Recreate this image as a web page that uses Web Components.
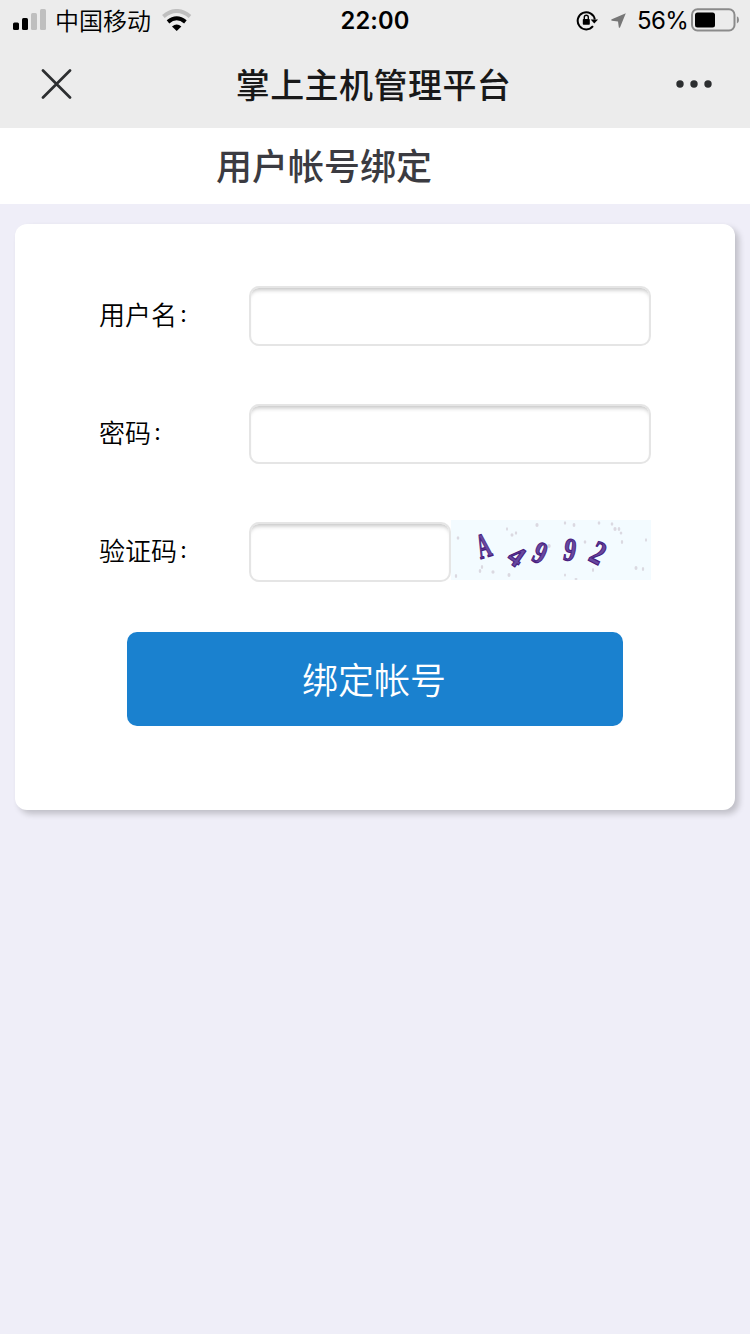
<!DOCTYPE html>
<html lang="zh-CN">
<head>
<meta charset="utf-8">
<title>掌上主机管理平台</title>
<style>
html,body{margin:0;height:100%}
body{background:#efeef8;font-family:Inter,"Noto Sans CJK SC",sans-serif;color:#000;overflow:hidden}
</style>
</head>
<body>
<bind-page></bind-page>
<script>
function define(name, html){
  const t=document.createElement('template');
  t.innerHTML=html;
  customElements.define(name,class extends HTMLElement{
    constructor(){
      super();
      this.attachShadow({mode:'open'}).appendChild(t.content.cloneNode(true));
    }
  });
}

define('status-bar',`
<style>
:host{display:grid;grid-template-columns:1fr auto 1fr;height:40px;align-items:center;background:#ececec;font-size:24px;line-height:38px}
.side{display:flex;align-items:center;height:40px}
.left{padding-left:13px}
.right{justify-content:flex-end;padding-right:11px}
svg{display:block;flex:none}
.carrier{margin:0 10px 0 9px;width:97px;white-space:nowrap;line-height:36px;padding-top:4px;font-weight:350}
.time{font-weight:600;font-size:23.7px;letter-spacing:.1px;width:70px;text-align:center;white-space:nowrap;padding-top:2px}
.pct{margin:0 5px 0 11px;letter-spacing:-.6px;width:50px;white-space:nowrap;padding-top:2px}
</style>
<div class="side left">
<svg width="33" height="22" viewBox="0 0 33 22"><rect y="13.5" width="6" height="7.5" rx="1.5"/><rect x="9" y="9" width="6" height="12" rx="1.5"/><g fill="#bfbfbf"><rect x="18" y="4" width="6" height="17" rx="1.5"/><rect x="27" y="0" width="6" height="21" rx="1.5"/></g></svg>
<span class="carrier">中国移动</span>
<svg width="30" height="22" viewBox="0 0 30 22"><g fill="none" stroke-width="4"><path stroke="#bfbfbf" d="M1.4 7.5Q14.7-3.5 28 7.5"/><path stroke="#000" d="M6 12.9Q14.7 5.7 23.4 12.9"/></g><path d="M10 17.4Q14.7 13.5 19.4 17.4L14.7 21.9Z"/></svg>
</div>
<span class="time">22:00</span>
<div class="side right">
<svg width="22" height="22" viewBox="0 0 22 22"><path fill="none" stroke="#000" stroke-width="2" d="M17 17.2A8.6 8.6 0 1 1 18.8 10.5"/><path d="M14.6 10.4H22L18.3 14.6Z"/><rect x="6.8" y="10" width="7" height="5.8" rx=".8"/><path fill="none" stroke="#000" stroke-width="1.4" d="M8.3 10.4V8.2a2 2 0 0 1 4 0v2.2"/></svg>
<svg width="15" height="15" viewBox="0 0 15 15" style="margin-left:13px"><path fill="#777" d="M14.8.2 9 14.4Q8.2 15.4 7.8 14.2L7 8.6 1 7.7Q-.4 7 .8 6.2Z"/></svg>
<span class="pct">56%</span>
<svg width="48" height="24" viewBox="0 0 48 24" style="margin-left:-1px"><rect x="1" y="1.3" width="42.5" height="21.2" rx="5.5" fill="none" stroke="#8b8b8b" stroke-width="2"/><rect x="4" y="4.5" width="20" height="15" rx="2.5"/><path fill="#8b8b8b" d="M45.9 8.3Q48 9 48 11.9T45.9 15.5Z"/></svg>
</div>`);

define('nav-bar',`
<style>
:host{display:grid;grid-template-columns:1fr auto 1fr;align-items:center;height:88px;background:#ececec;box-sizing:border-box;padding:0 38px 0 41px}
.title{font-size:34px;font-weight:500;letter-spacing:.45px;color:#191919;line-height:85px;padding-top:3px;margin-right:6px}
svg{display:block}
.more{justify-self:end}
</style>
<svg width="31" height="31" viewBox="0 0 31 31"><path d="M2 1.5 29 28.5M29 1.5 2 28.5" fill="none" stroke="#2c2e30" stroke-width="2.7" stroke-linecap="round"/></svg>
<span class="title"><slot></slot></span>
<svg class="more" width="36" height="8" viewBox="0 0 36 8" fill="#2c2e30"><circle cx="4" cy="4" r="3.7"/><circle cx="18" cy="4" r="3.7"/><circle cx="32" cy="4" r="3.7"/></svg>`);

define('page-title',`
<style>
:host{display:block;box-sizing:border-box;height:76px;line-height:74px;padding-top:2px;background:#fff;color:#3b3b41;font-size:36px;font-weight:500;padding-left:216px}
</style><slot></slot>`);

define('form-card',`
<style>
:host{display:flex;flex-direction:column;box-sizing:border-box;margin:20px 15px 0;height:586px;padding:62px 84px 0;background:#fff;border-radius:12px;box-shadow:4px 4px 6px rgba(0,0,0,.2)}
</style><slot></slot>`);

define('form-row',`
<style>
:host{display:flex;align-items:center;height:60px;margin-bottom:58px}
.label{width:150px;flex:none;font-size:26px;font-weight:350;line-height:60px}
.colon{position:relative;top:-3px;margin-left:2px;font-size:18px;line-height:1;font-weight:500}
.field{display:flex;width:402px}
</style>
<span class="label"><slot name="label"></slot><span class="colon">：</span></span><div class="field"><slot></slot></div>`);

define('text-field',`
<style>
:host{display:block;flex:1;min-width:0;height:60px}
input{display:block;box-sizing:border-box;width:100%;height:60px;border:2px solid #e5e5e5;border-radius:10px;background:#fff;box-shadow:inset 0 5px 4px -3px rgba(0,0,0,.24);outline:0;padding:0 10px;font:26px Inter,"Noto Sans CJK SC",sans-serif}
</style><input type="text">`);

define('captcha-code',`
<style>
:host{display:block;width:200px;height:60px;flex:none;position:relative;top:-2px}
svg{display:block}
text{font:700 32px "Liberation Serif",serif;text-anchor:middle;fill:#68489f;stroke:#48207f;stroke-width:1.2}
</style>
<svg width="200" height="60" viewBox="0 0 200 60"><rect width="200" height="60" fill="#f3fbff"/>
<g fill="#dbd9e1"><ellipse cx="7" cy="18" rx="1.3" ry="1.8"/><ellipse cx="5" cy="56" rx="1.2" ry="2"/><ellipse cx="56" cy="9" rx="1" ry="1.7"/><ellipse cx="61" cy="15" rx="1.5" ry="1.8"/><ellipse cx="65" cy="13" rx="1.2" ry="1.7"/><ellipse cx="86" cy="5" rx="1.6" ry="2"/><ellipse cx="114" cy="3" rx="1.2" ry="1.7"/><ellipse cx="123" cy="5" rx="1.4" ry="2"/><ellipse cx="148" cy="3" rx="1.3" ry="1.8"/><ellipse cx="161" cy="4" rx="1.3" ry="1.8"/><ellipse cx="164" cy="9" rx="1.6" ry="2"/><ellipse cx="168" cy="9" rx="1.3" ry="2"/><ellipse cx="170" cy="13" rx="1.3" ry="1.6"/><ellipse cx="171" cy="22" rx="1.2" ry="2"/><ellipse cx="195" cy="20" rx="1" ry="1.8"/><ellipse cx="31" cy="47" rx="1.2" ry="2"/><ellipse cx="29" cy="51" rx="1.3" ry="2"/><ellipse cx="42" cy="52" rx="1.6" ry="1.8"/><ellipse cx="58" cy="55" rx="1.5" ry="1.9"/><ellipse cx="98" cy="26" rx="1.7" ry="2"/><ellipse cx="134" cy="22" rx="1.3" ry="1.8"/><ellipse cx="142" cy="50" rx="1.1" ry="2"/><ellipse cx="125" cy="59" rx="1.5" ry="1"/><ellipse cx="185" cy="48" rx="1.5" ry="2"/><ellipse cx="192" cy="49" rx="1.2" ry="1.9"/><ellipse cx="114" cy="55" rx="1" ry="1.5"/></g>
<text transform="translate(32.5 26) rotate(-17) scale(.58 1.1)" y="10.5">A</text>
<text transform="translate(65.5 36.5) rotate(35) scale(.85 .92)" y="10.5">4</text>
<text transform="translate(89 33) rotate(25) scale(.75 .98)" y="10.5">9</text>
<text transform="translate(119 30) rotate(10) scale(.75 1.02)" y="10.5">9</text>
<text transform="translate(147 33) rotate(27) scale(.82 1.04)" y="10.5">2</text>
</svg>`);

define('primary-button',`
<style>
:host{display:block;margin:-8px 28px 0}
button{display:block;box-sizing:border-box;width:496px;height:94px;border:0;border-radius:10px;background:#1a81cf;color:#fff;padding:4px 2px 0 0;font:350 36px/90px Inter,"Noto Sans CJK SC",sans-serif;text-align:center}
</style><button><slot></slot></button>`);

define('bind-page',`
<style>:host{display:flex;flex-direction:column;height:1334px;background:#efeef8}</style>
<status-bar></status-bar>
<nav-bar>掌上主机管理平台</nav-bar>
<page-title>用户帐号绑定</page-title>
<form-card>
<form-row><span slot="label">用户名</span><text-field></text-field></form-row>
<form-row><span slot="label">密码</span><text-field></text-field></form-row>
<form-row><span slot="label">验证码</span><text-field></text-field><captcha-code></captcha-code></form-row>
<primary-button>绑定帐号</primary-button>
</form-card>`);
</script>
</body>
</html>
